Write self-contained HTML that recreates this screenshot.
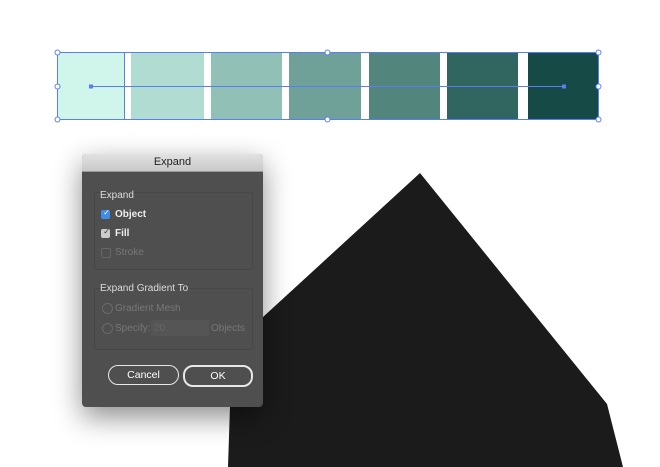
<!DOCTYPE html>
<html><head><style>
body{margin:0;width:660px;height:467px;background:#fff;position:relative;overflow:hidden;font-family:"Liberation Sans",sans-serif}
.sw{position:absolute;top:52px;height:68px}
.dlg{position:absolute;left:82px;top:154px;width:181px;height:253px;background:#4f4f4f;border-radius:4px;box-shadow:0 10px 28px rgba(0,0,0,.45);overflow:hidden}
.tt{height:17px;background:linear-gradient(#e2e2e2,#c9c9c9);border-bottom:1px solid #999;text-align:center;font-size:11px;line-height:17px;color:#222}
.grp{position:absolute;left:12px;width:157px;border:1px solid #474747;border-radius:3px}
.l{position:absolute;font-size:10px;color:#ddd;white-space:nowrap}
.d{color:#777}
.cb{position:absolute;width:9px;height:9px;border-radius:2px}
.btn{position:absolute;top:211px;height:18px;border:1.5px solid #e8e8e8;border-radius:10px;color:#fff;font-size:10.5px;text-align:center;line-height:18px}
.rd{position:absolute;width:9px;height:9px;border:1px solid #6a6a6a;border-radius:50%}
</style></head><body>
<div class="sw" style="left:57px;width:67px;background:#d0f6ec"></div>
<div class="sw" style="left:131px;width:73px;background:#b0dcd2"></div>
<div class="sw" style="left:211px;width:71px;background:#90c0b6"></div>
<div class="sw" style="left:289px;width:72px;background:#70a198"></div>
<div class="sw" style="left:369px;width:71px;background:#52857c"></div>
<div class="sw" style="left:447px;width:71px;background:#316660"></div>
<div class="sw" style="left:528px;width:70px;background:#164a46"></div>
<svg width="660" height="467" style="position:absolute;left:0;top:0">
<polygon points="420,173 607,404 623,467 228,467 232,345 263,317" fill="#1b1b1b"/>
<g stroke="#5a7cf5" fill="none" stroke-width="1">
<rect x="57.5" y="52.5" width="541" height="67"/>
<line x1="124.5" y1="52" x2="124.5" y2="120"/>
<line x1="91" y1="86.5" x2="564" y2="86.5"/>
</g>
<g fill="#5a7cf5"><rect x="89" y="84.5" width="4" height="4"/><rect x="562" y="84.5" width="4" height="4"/></g>
<g fill="#fff" stroke="#5a7cf5">
<circle cx="57.5" cy="52.5" r="2.5"/><circle cx="327.5" cy="52.5" r="2.5"/><circle cx="598.5" cy="52.5" r="2.5"/>
<circle cx="57.5" cy="86.5" r="2.5"/><circle cx="598.5" cy="86.5" r="2.5"/>
<circle cx="57.5" cy="119.5" r="2.5"/><circle cx="327.5" cy="119.5" r="2.5"/><circle cx="598.5" cy="119.5" r="2.5"/>
</g>
</svg>
<div class="dlg">
<div class="tt">Expand</div>
<div class="grp" style="top:38px;height:76px"></div>
<div class="grp" style="top:134px;height:60px"></div>
<div class="l" style="left:18px;top:36px">Expand</div>
<div class="cb" style="left:19px;top:56px;background:#3d8ee8"></div><div class="l" style="left:19px;top:54px;font-size:8px;color:#fff">&nbsp;✓</div>
<div class="l" style="left:33px;top:55px;font-weight:bold;color:#eee">Object</div>
<div class="cb" style="left:19px;top:75px;background:#ccc"></div><div class="l" style="left:19px;top:73px;font-size:8px;color:#333">&nbsp;✓</div>
<div class="l" style="left:33px;top:74px;font-weight:bold;color:#eee">Fill</div>
<div class="cb" style="left:19px;top:94px;border:1px solid #666;width:8px;height:8px"></div>
<div class="l d" style="left:33px;top:93px">Stroke</div>
<div class="l" style="left:18px;top:129px">Expand Gradient To</div>
<div class="rd" style="left:20px;top:149px"></div><div class="l d" style="left:33px;top:149px">Gradient Mesh</div>
<div class="rd" style="left:20px;top:169px"></div><div class="l d" style="left:33px;top:169px">Specify:</div>
<div style="position:absolute;left:69px;top:166px;width:58px;height:16px;background:#555"></div>
<div class="l" style="left:72px;top:169px;color:#666">20</div>
<div class="l d" style="left:129px;top:169px">Objects</div>
<div class="btn" style="left:26px;width:69px">Cancel</div>
<div class="btn" style="left:101px;width:66px;border-width:2px">OK</div>
</div>
</body></html>
